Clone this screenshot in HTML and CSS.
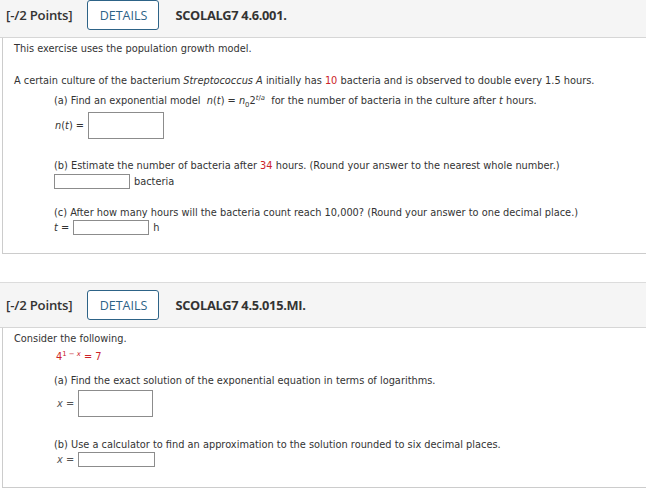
FILE: index.html
```html
<!DOCTYPE html>
<html>
<head>
<meta charset="utf-8">
<link rel="stylesheet" href="styles.css">
</head>
<body>
<div class="page">
  <section class="question first">
    <div class="q-header">
      <span class="points">[-/2 Points]</span>
      <button class="details">DETAILS</button>
      <span class="qid">SCOLALG7 4.6.001.</span>
    </div>
    <div class="q-body">
      <p class="line">This exercise uses the population growth model.</p>
      <p class="line gap-l">A certain culture of the bacterium <i>Streptococcus A</i> initially has <span class="red">10</span> bacteria and is observed to double every 1.5 hours.</p>
      <p class="line indent gap-s">(a) Find an exponential model &nbsp;<i>n</i>(<i>t</i>) = <i>n</i><sub>0</sub>2<sup><i>t</i>/<i>a</i></sup> &nbsp;for the number of bacteria in the culture after <i>t</i> hours.</p>
      <div class="answer indent row-a">
        <span class="lbl"><i>n</i>(<i>t</i>) =</span>
        <span class="box tall"></span>
      </div>
      <p class="line indent gap-b">(b) Estimate the number of bacteria after <span class="red">34</span> hours. (Round your answer to the nearest whole number.)</p>
      <div class="answer indent row-b">
        <span class="box short"></span>
        <span class="unit">bacteria</span>
      </div>
      <p class="line indent gap-c">(c) After how many hours will the bacteria count reach 10,000? (Round your answer to one decimal place.)</p>
      <div class="answer indent">
        <span class="lbl"><i>t</i> =</span>
        <span class="box short"></span>
        <span class="unit">h</span>
      </div>
    </div>
  </section>

  <section class="question second">
    <div class="q-header">
      <span class="points">[-/2 Points]</span>
      <button class="details">DETAILS</button>
      <span class="qid">SCOLALG7 4.5.015.MI.</span>
    </div>
    <div class="q-body body2">
      <p class="line">Consider the following.</p>
      <p class="line eq red">4<sup>1 &minus; <i>x</i></sup> = 7</p>
      <p class="line indent gap-d">(a) Find the exact solution of the exponential equation in terms of logarithms.</p>
      <div class="answer indent row-x">
        <span class="lbl xl"><i>x</i> =</span>
        <span class="box tall xw"></span>
      </div>
      <p class="line indent gap-e">(b) Use a calculator to find an approximation to the solution rounded to six decimal places.</p>
      <div class="answer indent">
        <span class="lbl xl"><i>x</i> =</span>
        <span class="box short xw2"></span>
      </div>
    </div>
  </section>
</div>
</body>
</html>
```

FILE: styles.css
```css
html, body {
  margin: 0;
  padding: 0;
  background: #ffffff;
}
body {
  font-family: "DejaVu Sans", Verdana, sans-serif;
  font-size: 9.8px;
  color: #333333;
}
.page {
  margin-top: -8px;
}
.question.second {
  margin-top: 28px;
}
.q-header {
  display: flex;
  align-items: center;
  height: 44px;
  background: #f5f5f5;
  border-top: 1px solid #dcdcdc;
  border-bottom: 1px solid #d6d6d6;
  padding-left: 6px;
  font-family: "Open Sans", "Liberation Sans", sans-serif;
  color: #333333;
}
.points {
  font-weight: 600;
  font-size: 13.2px;
  letter-spacing: -0.2px;
}
.details {
  margin-left: 15px;
  width: 72px;
  height: 30px;
  border: 1px solid #2d6387;
  border-radius: 3px;
  background: #ffffff;
  color: #2d6387;
  font-family: "Open Sans", "Liberation Sans", sans-serif;
  font-size: 12.5px;
  padding: 0;
}
.qid {
  margin-left: 16px;
  font-weight: 700;
  font-size: 12.8px;
  letter-spacing: -0.3px;
}
.q-body {
  margin-left: 2px;
  border-left: 1px solid #cccccc;
  border-bottom: 1px solid #cccccc;
  padding: 4px 0 18px 11px;
}
.body2 {
  padding-bottom: 20px;
}
.line {
  margin: 0;
  line-height: 14px;
  white-space: nowrap;
}
.indent {
  margin-left: 40px;
}
.gap-l { margin-top: 18px; }
.gap-s { margin-top: 6px; }
.gap-b { margin-top: 20px; }
.gap-c { margin-top: 17px; }
.gap-d { margin-top: 10px; }
.gap-e { margin-top: 21px; }
.eq { margin-left: 42px; margin-top: 4px; }
.red { color: #cc2229; }
sub, sup {
  font-size: 70%;
  line-height: 0;
}
.answer {
  display: flex;
  align-items: center;
  gap: 4px;
}
.row-a { margin-top: 4px; margin-left: 41px; }
.row-b { margin-top: 1px; }
.row-x { margin-top: 2px; }
.lbl {
  white-space: nowrap;
}
.xl {
  margin-left: 3px;
  color: #555555;
}
.box {
  display: inline-block;
  border: 1px solid #8c8c8c;
  background: #ffffff;
  box-sizing: border-box;
}
.tall {
  width: 76px;
  height: 27px;
}
.short {
  width: 76px;
  height: 15px;
}
.xw { width: 75px; height: 27px; }
.xw2 { width: 77px; }
.unit {
  white-space: nowrap;
}
```
